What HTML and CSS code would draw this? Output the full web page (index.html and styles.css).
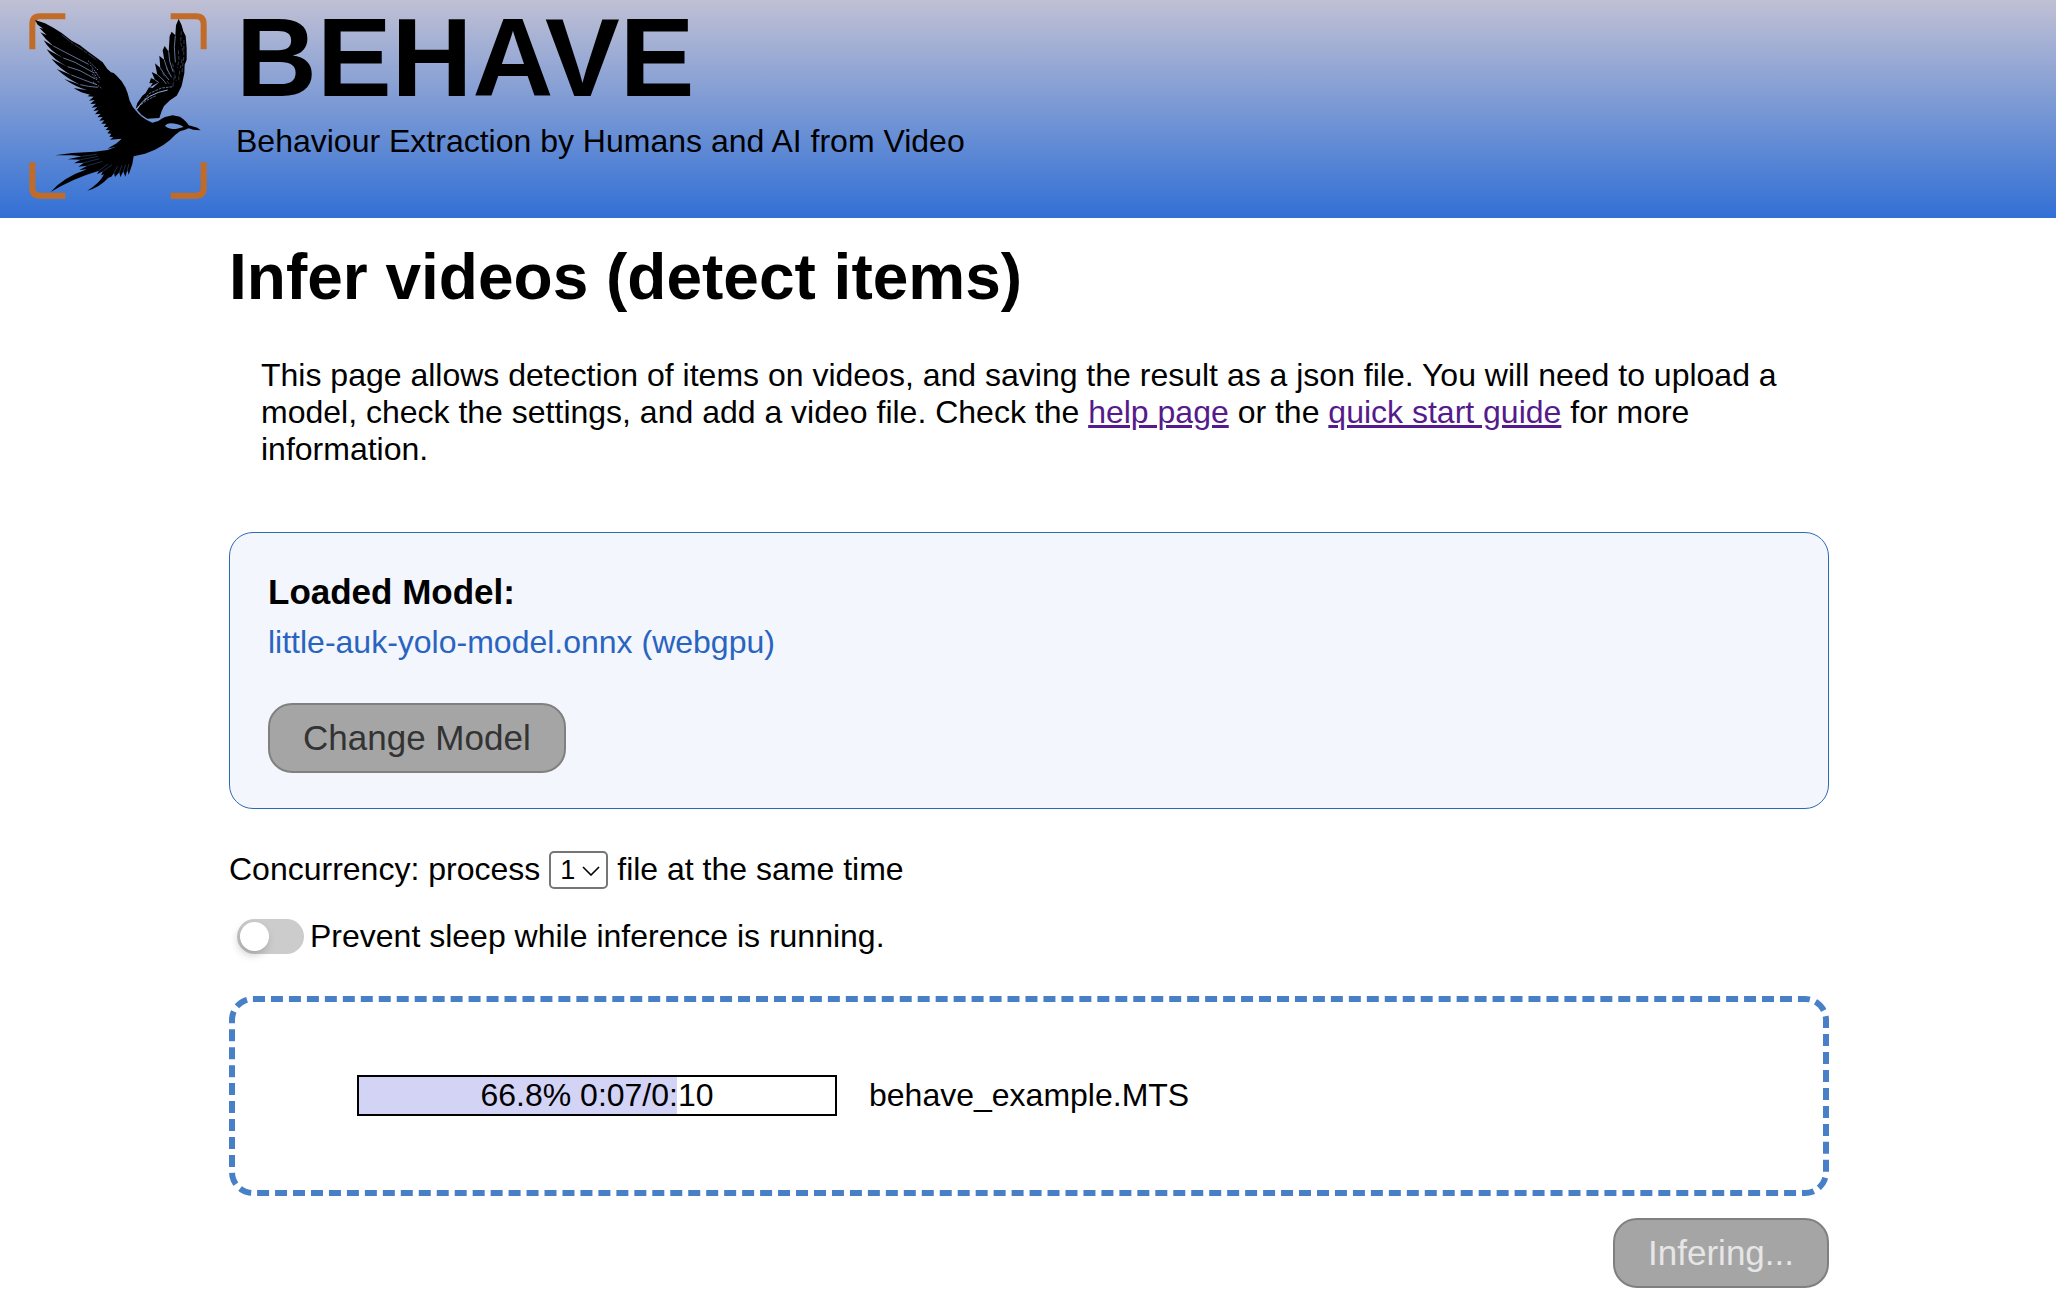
FILE: index.html
```html
<!DOCTYPE html>
<html lang="en">
<head>
<meta charset="utf-8">
<meta name="viewport" content="width=device-width, initial-scale=1">
<title>BEHAVE - Infer videos</title>
<link rel="stylesheet" href="styles.css">
</head>
<body>
<header class="banner">
  <svg class="logo" viewBox="0 0 708 654" aria-hidden="true">
    <!-- corner brackets -->
    <g fill="none" stroke="#c06c28" stroke-width="18">
      <path d="M97 148V72Q97 49 120 49H196"/>
      <path d="M512 49H588Q611 49 611 72V148"/>
      <path d="M97 487V564Q97 587 120 587H196"/>
      <path d="M512 587H588Q611 587 611 564V487"/>
    </g>
    <!-- left wing, body, head and tail -->
    <path fill-rule="evenodd" d="M105 60L135 70L160 83L185 99L215 122L240 136L265 155L290 173L308 187L322 207L333 217L341 219L350 227L365 244L376 262L383 280L389 302L398 320L406 330Q425 356 457 368L475 363Q485 355 495 351L518 346L540 350L552 359L562 370L566 376L582 380L592 383L602 391L580 389L566 385L555 389L540 394L526 404L510 420L490 435L465 449L435 461L401 469L397 492L386 524L382 510L376 530L370 514L361 532L358 517L345 531L342 519L334 530L325 533Q300 561 262 572Q300 549 312 523L303 526L309 514L291 523L297 512Q216 536 152 576Q190 532 261 508L238 510L262 497L235 500L252 488L222 490L242 479L203 478L246 469L215 466L165 466L217 459L284 455L323 450L346 441L322 446L350 430L365 416L330 419L340 411L328 410L334 401L322 400L330 391L317 390L325 381L311 381L319 371L304 371L313 361L298 362L308 351L292 352L302 341L285 343L296 331L280 333L292 321L275 323L288 311L271 312L284 300L267 302L281 290L262 289L270 284Q243 279 221 264L262 271Q226 260 193 237L241 254Q203 237 170 207L214 225Q182 208 154 176L203 200Q160 180 140 148L190 174Q149 153 131 121L160 138Q136 119 121 97L140 106L118 83L130 86L113 74ZM495 377Q500 371 510 370Q535 370 551 381L528 387Q503 387 495 377Z"/>
    <!-- right wing -->
    <path d="M536 57L545 76L550 94L557 108L560 145L560 179L554 194L553 220L547 248L544 260L536 276L530 287L510 301L492 318L485 333L478 354L442 356L425 345L411 329L424 310L407 326L412 309L427 287L437 279L447 262L458 264L478 246L450 262L458 249L448 250L453 234L465 240L455 216L472 224L465 190L481 204L478 167L493 180L488 151L494 138L506 155L509 108L515 95L526 106L528 76Z"/>
    <!-- light between the feathers -->
    <g fill="none" stroke="#92a9da" stroke-width="2">
      <path d="M185 104L221 132L251 152L292 181" stroke-width="1" stroke-dasharray="30 3 12 4"/>
      <path d="M160 138L200 159L266 193M190 174L225 187L281 218M203 200L240 212L286 237M214 225L250 239L290 254M241 254L265 259L294 262"/>
      <path d="M264 182L294 210M271 195L292 223M276 208L293 239M277 222L297 248M286 215L302 238M279 246L304 264" stroke-dasharray="5 4"/>
      <path d="M465 240L476 247M472 224L488 238L499 252M481 204L493 223L507 240M493 180L501 207L515 232M506 155L509 183L519 215M526 107L523 142L526 187"/>
      <path d="M544 94L542 128L549 154M535 151L537 178L532 204M552 120L551 173L546 218M488 218L493 230M518 190L523 220L529 242M501 243L511 257M523 230L518 260M539 212L536 237L541 246M501 202L505 221M546 178L541 205" stroke-width="1" stroke-dasharray="12 5"/>
      <path d="M411 327Q424 304 449 289Q474 275 503 270" stroke-width="3"/>
      <path d="M423 314Q443 297 467 288M433 299L449 280L484 264L520 260" stroke-dasharray="8 3"/>
    </g>
    <!-- notches in the tail fan -->
    <g fill="none" stroke="#5583d3" stroke-width="1">
      <path d="M246 469L290 463M242 479L294 469M252 488L299 476M262 497L308 484M297 512L324 492M309 514L336 494M342 519L353 498M358 517L366 496M370 514L377 494M382 510L387 492"/>
    </g>
  </svg>
  <div class="brand">
    <div class="brand-name">BEHAVE</div>
    <div class="brand-tagline">Behaviour Extraction by Humans and AI from Video</div>
  </div>
</header>

<main class="page">
  <h1 class="page-title">Infer videos (detect items)</h1>
  <p class="intro">This page allows detection of items on videos, and saving the result as a json file. You will need to upload a model, check the settings, and add a video file. Check the <a class="link" href="#help">help page</a> or the <a class="link" href="#quick-start">quick start guide</a> for more information.</p>

  <section class="model">
    <h2 class="model-title">Loaded Model:</h2>
    <div class="model-name">little-auk-yolo-model.onnx (webgpu)</div>
    <button class="button" type="button">Change Model</button>
  </section>

  <div class="concurrency">
    <label for="concurrency">Concurrency: process</label>
    <span class="select-wrap">
      <select class="select" id="concurrency">
        <option>1</option>
        <option>2</option>
        <option>3</option>
        <option>4</option>
      </select>
      <svg class="chevron" viewBox="0 0 18 10" aria-hidden="true"><path d="M1 1L9 9L17 1" fill="none" stroke="#000" stroke-width="1.6"/></svg>
    </span>
    <span>file at the same time</span>
  </div>

  <div class="sleep">
    <input class="toggle" type="checkbox" id="prevent-sleep">
    <label for="prevent-sleep">Prevent sleep while inference is running.</label>
  </div>

  <section class="dropzone">
    <div class="progress" role="progressbar" aria-label="behave_example.MTS" aria-valuemin="0" aria-valuemax="100" aria-valuenow="66.8">
      <div class="progress-fill" style="width: 66.8%"></div>
      <span class="progress-text">66.8% 0:07/0:10</span>
    </div>
    <div class="file-name">behave_example.MTS</div>
  </section>

  <div class="actions">
    <button class="button button-busy" type="button">Infering...</button>
  </div>
</main>
</body>
</html>
```

FILE: styles.css
```css
* {
  box-sizing: border-box;
}

body {
  margin: 0;
  background: #fff;
  color: #000;
  font: 32px/37px Arial, "Liberation Sans", sans-serif;
}

/* Banner */
.banner {
  display: flex;
  height: 218px;
  background: linear-gradient(#c0c0d4, #3270d5);
}

.logo {
  flex: none;
  width: 236px;
  height: 218px;
}

.brand {
  display: flex;
  flex-direction: column;
  gap: 7px;
}

.brand-name {
  font-size: 112px;
  font-weight: bold;
  line-height: 116px;
}

/* Page */
.page {
  max-width: 1602px;
  margin: 0 auto;
  padding: 22px 0 28px 2px;
}

.page-title {
  margin: 0 0 43px;
  font-size: 64px;
  line-height: 74px;
}

.intro {
  margin: 0 32px 64px;
}

.link {
  color: #551a8b;
}

/* Loaded model */
.model {
  padding: 39px 38px 35px;
  border: 1px solid #2f69b5;
  border-radius: 24px;
  background: #f3f6fc;
}

.model-title {
  margin: 0 0 12px;
  font-size: 35px;
  line-height: 40px;
}

.model-name {
  margin-bottom: 42px;
  color: #2964c0;
}

.button {
  display: block;
  height: 70px;
  padding: 0 33px;
  border: 2px solid #808080;
  border-radius: 24px;
  background: #a5a5a5;
  color: #333;
  font: 35px/40px Arial, "Liberation Sans", sans-serif;
}

.button-busy {
  color: #e6e6e6;
}

/* Settings */
.concurrency {
  display: flex;
  gap: 9px;
  margin-top: 42px;
}

.select-wrap {
  display: flex;
  position: relative;
}

.select {
  appearance: none;
  width: 59px;
  height: 38px;
  margin: 0;
  padding: 0 9px;
  border: 2px solid #767676;
  border-radius: 5px;
  background: #fff;
  color: #000;
  font: 27px/32px Arial, "Liberation Sans", sans-serif;
}

.chevron {
  position: absolute;
  top: 15px;
  right: 8px;
  width: 18px;
  height: 10px;
  pointer-events: none;
}

.sleep {
  display: flex;
  align-items: center;
  gap: 6px;
  margin: 29px 0 41px 8px;
}

.toggle {
  appearance: none;
  display: flex;
  align-items: center;
  width: 67px;
  height: 35px;
  margin: 0;
  padding: 3px;
  border-radius: 18px;
  background: #ccc;
}

.toggle::before {
  content: "";
  width: 29px;
  height: 29px;
  border-radius: 50%;
  background: #fff;
  box-shadow: -2px 4px 8px rgba(0, 0, 0, 0.2);
}

.toggle:checked {
  justify-content: flex-end;
  background: #4880c8;
}

/* Drop zone */
.dropzone {
  display: flex;
  align-items: center;
  gap: 32px;
  min-height: 200px;
  padding: 0 122px 2px;
  border: 6px dashed #4880c8;
  border-radius: 24px;
}

.progress {
  display: grid;
  width: 480px;
  border: 2px solid #000;
}

.progress-fill,
.progress-text {
  grid-area: 1 / 1;
}

.progress-fill {
  background: #d3d3f5;
}

.progress-text {
  text-align: center;
}

.actions {
  display: flex;
  justify-content: flex-end;
  margin-top: 22px;
}
```
